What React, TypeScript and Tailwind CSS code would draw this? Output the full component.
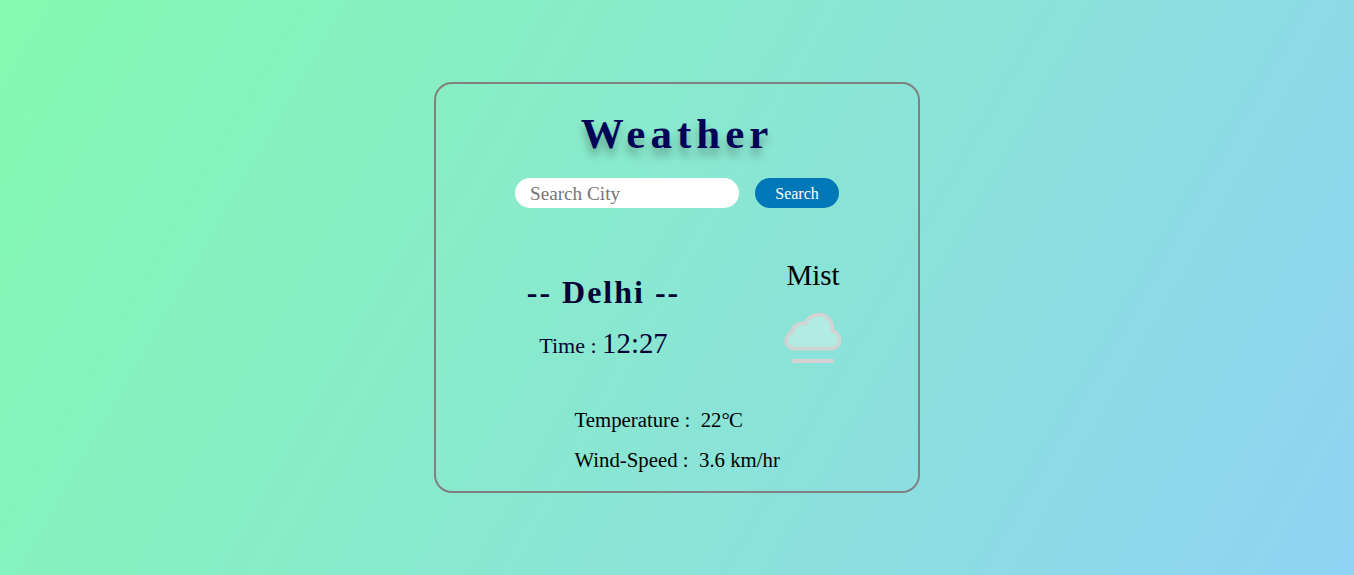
export default function App() {
  return (
    <main className="flex h-[575px] w-full items-center justify-center bg-[linear-gradient(120deg,#84fab0_0%,#8fd3f4_100%)] font-['Liberation_Serif',serif]">
      <section className="flex h-[411px] w-[486px] flex-col items-center rounded-[18px] border-2 border-[gray]">
        <h1 className="mt-[26px] h-[48px] text-[43px] leading-[48px] font-bold tracking-[5px] text-[#020257] [text-shadow:0px_8px_9px_rgba(0,0,0,0.28)]">Weather</h1>
        <form className="mt-[20px] flex h-[30px] gap-4" onSubmit={(e) => e.preventDefault()}>
          <input className="w-[224px] rounded-full bg-white px-[15px] pt-[2px] text-[19.2px] placeholder:text-[#757575] outline-none" placeholder="Search City" />
          <button className="w-[84px] rounded-full bg-[#0077b6] pt-[2px] text-[16px] text-white">Search</button>
        </form>
        <div className="mt-[48px] flex w-[324px] justify-between">
          <div className="flex w-[177px] flex-col items-center pt-[18px] text-[#030335]">
            <h2 className="h-[37px] text-[32px] leading-[37px] font-bold tracking-[2px] whitespace-nowrap">-- Delhi --</h2>
            <p className="mt-[16px] h-[33px] text-[22px] leading-[33px] whitespace-nowrap">Time : <span className="text-[28.8px]">12:27</span></p>
          </div>
          <div className="flex w-[52px] flex-col items-center">
            <p className="text-[29px] leading-[38px]">Mist</p>
            <svg className="mt-[16px] shrink-0" width="60" height="54" viewBox="0 0 60 54" fill="none" stroke="#d3d3d3" strokeWidth="3.8" strokeLinejoin="round"><path fill="#b0ebe4" d="M12 38.7C1.5 38.7 0 25.5 9.5 22.5C9.5 16 15.5 12 22.5 13.8C25 7.5 30 4.7 36 4.7C44.5 4.7 50.5 12 49 20.5C59 23.5 59 38.7 48 38.7Z"/><path d="M9 51H51"/></svg>
          </div>
        </div>
        <div className="mt-[44px] ml-px w-[206px] text-[20.8px] leading-[24px] whitespace-pre">
          <p>Temperature :  22<span className="tracking-[-0.8px]">°C</span></p>
          <p className="mt-[16px]">Wind-Speed :  3.6 km/hr</p>
        </div>
      </section>
    </main>
  );
}
